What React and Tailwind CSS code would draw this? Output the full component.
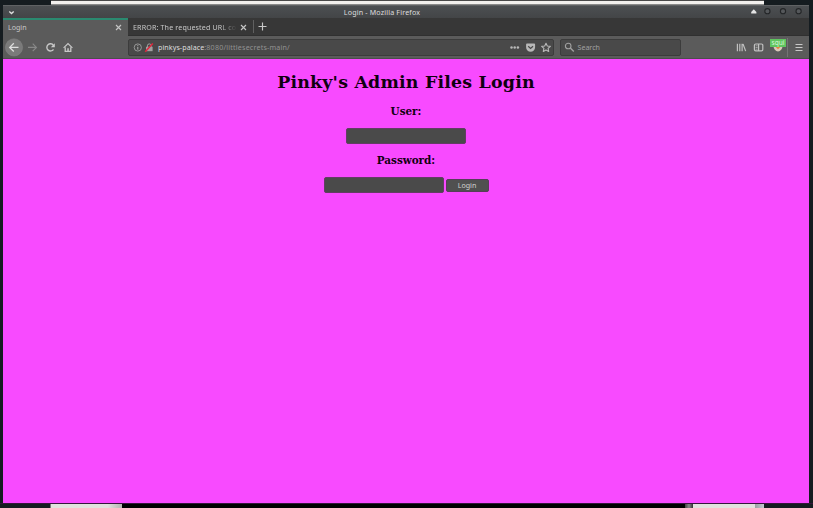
import React from "react";

function TitleBar() {
  return (
    <div className="flex h-[13px] shrink-0 items-center border-t border-[#606264] bg-linear-to-b from-[#4c4f52] to-[#434547] text-[#dedede]">
      <div className="flex w-[14px] pl-[5px]">
        <svg className="h-[7px] w-[7px]" viewBox="0 0 7 7" fill="none" stroke="currentColor" strokeWidth="1.4">
          <path d="M1.3 2.5 3.5 4.5 5.7 2.5" />
        </svg>
      </div>
      <div className="flex-1 text-center text-[7.1px] leading-[12px] tracking-[0.17px] whitespace-nowrap">
        Login - Mozilla Firefox
      </div>
      <svg className="h-[12px] w-[62px]" viewBox="0 0 62 12">
        <path d="M4.2 7.6V6L6.8 3.2 9.4 6v1.6Z" fill="#e4e4e4" />
        {[20.4, 36, 51.6].map((x) => (
          <circle key={x} cx={x} cy="5.2" r="2.6" fill="#55585b" stroke="#232527" strokeWidth="1.1" />
        ))}
      </svg>
    </div>
  );
}

function Close() {
  return (
    <svg className="h-[7px] w-[7px] shrink-0" viewBox="0 0 7 7" stroke="#c4c4c4" strokeWidth="1.15">
      <path d="M1 1 6 6M6 1 1 6" />
    </svg>
  );
}

function TabBar() {
  return (
    <div className="flex h-[18px] shrink-0 bg-[#373737] text-[7.1px] text-[#c8c8c8]">
      <div className="flex w-[125px] items-center justify-between border-t-2 border-[#2a8a70] bg-[#5b5b5b] pr-[6px] pb-px pl-[5px]">
        <span>Login</span>
        <Close />
      </div>
      <div className="flex w-[125px] items-center justify-between border-b border-[#303030] pt-px pr-[6px] pl-[5px]">
        <span className="w-[104px] mask-r-from-84% tracking-[0.15px] whitespace-nowrap">ERROR: The requested URL co</span>
        <Close />
      </div>
      <div className="flex flex-1 items-center border-b border-[#303030]">
        <span className="h-[13px] w-px bg-[#606060]" />
        <svg className="ml-[4px] h-[9px] w-[9px]" viewBox="0 0 9 9" stroke="#c8c8c8" strokeWidth="1.15">
          <path d="M4.5 .5v8M.5 4.5h8" />
        </svg>
      </div>
    </div>
  );
}

function NavButtons() {
  return (
    <svg className="h-[22px] w-[125px] shrink-0" viewBox="3 36 125 22" fill="none" stroke="#c8c8c8" strokeWidth="1.3">
      <circle cx="14" cy="47.4" r="8.6" fill="#7a7a7a" stroke="#858585" strokeWidth=".5" />
      <path d="M18.5 47.4H9.8M13.8 43.3 9.7 47.4 13.8 51.5" stroke="#dedede" strokeWidth="1.3" />
      <path d="M28 47.4h8.2M32.7 43.7l3.7 3.7-3.7 3.7" stroke="#888" strokeWidth="1.15" />
      <path d="M53.4 45.3a3.6 3.6 0 1 0 .1 4" strokeWidth="1.4" />
      <path d="M54.8 43.2v4h-4z" fill="#c8c8c8" stroke="none" />
      <path d="M63.6 47.9 68 43.6l4.4 4.3" strokeWidth="1.2" />
      <path d="M65.2 47.2v4.2h5.6v-4.2" />
      <path d="M67.3 48.2h1.5v3h-1.5z" fill="#c8c8c8" stroke="none" />
    </svg>
  );
}

function AddressBar() {
  return (
    <div className="flex h-[17px] w-[426px] items-center rounded-[2px] border border-[#3c3c3c] bg-[#494949] text-[7.1px]">
      <svg className="h-[13px] w-[29px] shrink-0" viewBox="129 41 29 13" fill="none">
        <circle cx="137.8" cy="47.5" r="3.6" stroke="#a8a8a8" strokeWidth=".8" />
        <path d="M137.8 47v2.6M137.8 45.2v1" stroke="#b0b0b0" />
        <path d="M147.4 47v-1.2a1.9 1.9 0 0 1 3.8 0V47" stroke="#a0a0a0" />
        <path d="M146 46.8h6.6v4.4H146z" fill="#a0a0a0" />
        <path d="M145.2 51.8 152.8 43.4" stroke="#e0263c" strokeWidth="1.5" />
      </svg>
      <span className="pt-px whitespace-nowrap text-[#929292]">
        <span className="tracking-[0.08px] text-[#dedede]">pinkys-palace</span>
        <span className="tracking-[0.2px]">:8080/littlesecrets-main/</span>
      </span>
      <svg className="ml-auto h-[13px] w-[46px] shrink-0" viewBox="507 41 46 13" fill="#b8b8b8">
        <circle cx="511.5" cy="47.5" r="1.25" />
        <circle cx="514.7" cy="47.5" r="1.25" />
        <circle cx="517.9" cy="47.5" r="1.25" />
        <path d="M527 43.6h7.2q.9 0 .9.9v2.7a4.5 4.5 0 0 1-9 0v-2.7q0-.9.9-.9z" />
        <path d="M528.2 46.2 530.6 48.5 533 46.2" fill="none" stroke="#494949" strokeWidth="1.2" />
        <path d="m546 43.2 1.3 2.8 3.05.35-2.25 2.05.6 3-2.7-1.5-2.7 1.5.6-3-2.25-2.05 3.05-.35z" fill="none" stroke="#b8b8b8" strokeWidth="1.1" strokeLinejoin="round" />
      </svg>
    </div>
  );
}

function SearchBar() {
  return (
    <div className="ml-[6px] flex h-[17px] w-[121px] items-center rounded-[2px] border border-[#3c3c3c] bg-[#494949] text-[7.1px] text-[#a0a0a0]">
      <svg className="mr-[2.5px] ml-[3px] h-[11px] w-[11px]" viewBox="0 0 11 11" fill="none" stroke="#a0a0a0" strokeWidth="1.1">
        <circle cx="4.2" cy="4" r="2.8" />
        <path d="m6.3 6.1 3.5 3.5" strokeWidth="1.4" />
      </svg>
      <span className="pt-px">Search</span>
    </div>
  );
}

function Tools() {
  return (
    <div className="ml-auto flex h-full items-start">
      <svg className="h-[22px] w-[33px]" viewBox="732 36 33 22" fill="none" stroke="#c0c0c0" strokeWidth="1.2">
        <path d="M737.4 43.8v7.4M739.8 43.8v7.4M742.1 43.8v7.4M743 44l2.7 7.1" />
        <rect x="754.4" y="44" width="8.4" height="6.9" rx="1.3" />
        <path d="M758.6 44v7" />
        <path d="M755.6 45.8h2M755.6 47.5h2M755.6 49.2h2" strokeWidth=".7" />
      </svg>
      <div className="ml-[5px] flex w-[16px] flex-col items-center pt-[3px]">
        <span className="z-10 h-[8px] w-[16px] bg-[#5fc55f] text-center text-[6.6px] leading-[7px] text-[#d8f5d8]">squi</span>
        <svg className="mt-[-1px] h-[6px] w-[10px]" viewBox="0 0 10 6">
          <path d="M.5 0h9A4.5 5.4 0 0 1 .5 0z" fill="#d9c8b8" />
          <path d="M1.8 0h6.4L5 3.2z" fill="#e88238" />
        </svg>
      </div>
      <span className="ml-px mt-[2px] h-[19px] w-px bg-[#747474]" />
      <svg className="mr-[6px] ml-[7px] h-[22px] w-[8px]" viewBox="0 0 8 22" stroke="#c8c8c8" strokeWidth="1.1">
        <path d="M.5 8.5h7M.5 11.5h7M.5 14.5h7" />
      </svg>
    </div>
  );
}

function LoginPage() {
  return (
    <main className="flex flex-1 flex-col items-center bg-[#f84aff] font-['DejaVu_Serif',serif] font-bold text-[#100010]">
      <h1 className="mt-[12px] text-[17.4px] leading-[22px] tracking-[0.2px] whitespace-nowrap">Pinky's Admin Files Login</h1>
      <h2 className="mt-[11px] text-[10.4px] leading-[14px]">User:</h2>
      <input className="mt-[10px] h-[16px] w-[120px] rounded-[2px] border border-[#633c65] bg-[#4a4a4a]" />
      <h2 className="mt-[9px] text-[10.4px] leading-[14px]">Password:</h2>
      <div className="mt-[10px] flex items-center">
        <input type="password" className="h-[16px] w-[120px] rounded-[2px] border border-[#633c65] bg-[#4a4a4a]" />
        <button className="mt-[1px] ml-[2px] h-[13px] w-[43px] rounded-[2px] border border-[#573d59] bg-[#505050] font-['Noto_Sans',sans-serif] text-[7.1px] leading-[11px] font-normal text-[#d0d0d0]">Login</button>
      </div>
    </main>
  );
}

export default function App() {
  return (
    <div className="flex h-[508px] w-[813px] flex-col overflow-hidden bg-[#151c20] font-['Noto_Sans',sans-serif]">
      <div className="flex h-[5px] shrink-0 pl-[51px]">
        <div className="h-full w-[713px] border-t border-b border-t-[#4a4a4a] border-b-[#8a8a8a] bg-[#f2f0ee]" />
      </div>
      <div className="ml-[3px] flex h-[498px] w-[806px] shrink-0 flex-col">
        <TitleBar />
        <TabBar />
        <div className="flex h-[23px] shrink-0 items-center border-b border-[#4d4d4d] bg-[#5b5b5b]">
          <NavButtons />
          <AddressBar />
          <SearchBar />
          <Tools />
        </div>
        <LoginPage />
      </div>
      <div className="flex h-[5px] shrink-0 border-t border-[#35153c] pl-[50px]">
        <div className="w-[72px] border-l border-[#777] bg-linear-to-r from-[#e2e1dd] from-80% to-[#b6b5b2]" />
        <div className="w-[563px] bg-black" />
        <div className="w-[8px] bg-linear-to-r from-[#444] via-[#888] to-[#333]" />
        <div className="w-[62px] bg-[#e2e1dd]" />
        <div className="w-[9px] bg-linear-to-r from-[#9a9ea3] to-[#c4c9d0]" />
      </div>
    </div>
  );
}
